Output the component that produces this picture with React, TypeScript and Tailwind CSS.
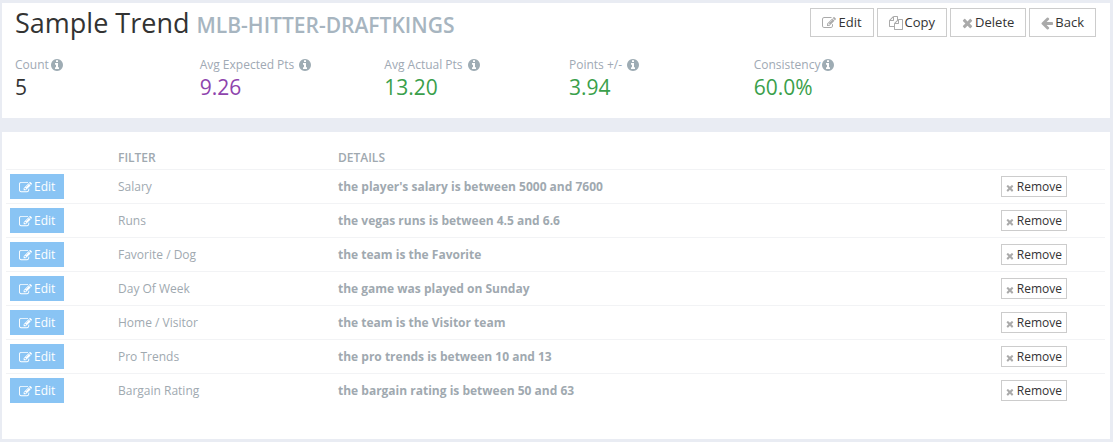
import type { ReactNode } from "react";

const ICONS = {
  edit: {
    viewBox: "0 0 1792 1792",
    d: "M888 1184l116-116-152-152-116 116v56h96v96h56zm440-720q-16-16-33 1l-350 350q-17 17-1 33t33-1l350-350q17-17 1-33zm80 594v190q0 119-84.5 203.5t-203.5 84.5h-832q-119 0-203.5-84.5t-84.5-203.5v-832q0-119 84.5-203.5t203.5-84.5h832q63 0 117 25 15 7 18 23 3 17-9 29l-49 49q-14 14-32 8-23-6-45-6h-832q-66 0-113 47t-47 113v832q0 66 47 113t113 47h832q66 0 113-47t47-113v-126q0-13 9-22l64-64q15-15 35-7t20 29zm-96-738l288 288-672 672h-288v-288zm444 132l-92 92-288-288 92-92q28-28 68-28t68 28l152 152q28 28 28 68t-28 68z",
  },
  copy: {
    viewBox: "0 0 1792 1792",
    d: "M1696 384q40 0 68 28t28 68v1216q0 40-28 68t-68 28h-960q-40 0-68-28t-28-68v-288h-544q-40 0-68-28t-28-68v-672q0-40 20-88t48-76l408-408q28-28 76-48t88-20h416q40 0 68 28t28 68v328q68-40 128-40h416zm-544 213l-299 299h299v-299zm-640-384l-299 299h299v-299zm196 647l316-316v-416h-384v416q0 40-28 68t-68 28h-416v640h512v-256q0-40 20-88t48-76zm956 804v-1152h-384v416q0 40-28 68t-68 28h-416v640h896z",
  },
  times: {
    viewBox: "192 0 1408 1792",
    d: "M1490 1322q0 40-28 68l-136 136q-28 28-68 28t-68-28l-294-294-294 294q-28 28-68 28t-68-28l-136-136q-28-28-28-68t28-68l294-294-294-294q-28-28-28-68t28-68l136-136q28-28 68-28t68 28l294 294 294-294q28-28 68-28t68 28l136 136q28 28 28 68t-28 68l-294 294 294 294q28 28 28 68z",
  },
  back: {
    viewBox: "128 0 1536 1792",
    d: "M1664 896v128q0 53-32.5 90.5t-84.5 37.5h-704l293 294q38 36 38 90t-38 90l-75 76q-37 37-90 37-52 0-91-37l-651-652q-37-37-37-90 0-52 37-91l651-650q38-38 91-38 52 0 90 38l75 74q38 38 38 91t-38 91l-293 293h704q52 0 84.5 37.5t32.5 90.5z",
  },
  info: {
    viewBox: "128 0 1536 1792",
    d: "M1152 1376v-160q0-14-9-23t-23-9h-96v-512q0-14-9-23t-23-9h-320q-14 0-23 9t-9 23v160q0 14 9 23t23 9h96v320h-96q-14 0-23 9t-9 23v160q0 14 9 23t23 9h448q14 0 23-9t9-23zm-128-896v-160q0-14-9-23t-23-9h-192q-14 0-23 9t-9 23v160q0 14 9 23t23 9h192q14 0 23-9t9-23zm640 416q0 209-103 385.5t-279.5 279.5-385.5 103-385.5-103-279.5-279.5-103-385.5 103-385.5 279.5-279.5 385.5-103 385.5 103 279.5 279.5 103 385.5z",
  },
};

function Icon({ name, className }: { name: keyof typeof ICONS; className: string }) {
  const icon = ICONS[name];
  return (
    <svg viewBox={icon.viewBox} fill="currentColor" className={className} aria-hidden="true">
      <path d={icon.d} />
    </svg>
  );
}

const stats = [
  { label: "Count", value: "5", color: "text-[#333333]", gap: "gap-[2px]" },
  { label: "Avg Expected Pts", value: "9.26", color: "text-[#8e44ad]", gap: "gap-[5px]" },
  { label: "Avg Actual Pts", value: "13.20", color: "text-[#3a9f4b]", gap: "gap-[5px]" },
  { label: "Points +/-", value: "3.94", color: "text-[#3a9f4b]", gap: "gap-[5px]" },
  { label: "Consistency", value: "60.0%", color: "text-[#3a9f4b]", gap: "gap-[2px]" },
];

const filters = [
  { name: "Salary", details: "the player's salary is between 5000 and 7600" },
  { name: "Runs", details: "the vegas runs is between 4.5 and 6.6" },
  { name: "Favorite / Dog", details: "the team is the Favorite" },
  { name: "Day Of Week", details: "the game was played on Sunday" },
  { name: "Home / Visitor", details: "the team is the Visitor team" },
  { name: "Pro Trends", details: "the pro trends is between 10 and 13" },
  { name: "Bargain Rating", details: "the bargain rating is between 50 and 63" },
];

function ToolbarButton({ icon, children }: { icon: keyof typeof ICONS; children: ReactNode }) {
  return (
    <button
      type="button"
      className="flex h-[29px] items-center gap-[2px] border border-[#cccccc] bg-white px-[11px] text-[13px] text-[#333333] hover:bg-gray-100"
    >
      <Icon name={icon} className="h-[14px] text-[#aaaaaa]" />
      {children}
    </button>
  );
}

export default function App() {
  return (
    <main className="min-h-screen bg-[#e9ecf3] pt-[3px] pr-[3px] pb-[3px] pl-[2px] font-['Open_Sans',sans-serif]">
      <section className="bg-white pb-[18px]">
        <div className="flex items-start justify-between pr-[14px] pl-[13px]">
          <h1 className="pt-[2px] text-[27px] leading-[36px] text-[#333333]">
            Sample Trend <small className="text-[21px] font-semibold text-[#a7b5c0]">MLB-HITTER-DRAFTKINGS</small>
          </h1>
          <div className="flex gap-[3px] pt-[5px]">
            <ToolbarButton icon="edit">Edit</ToolbarButton>
            <ToolbarButton icon="copy">Copy</ToolbarButton>
            <ToolbarButton icon="times">Delete</ToolbarButton>
            <ToolbarButton icon="back">Back</ToolbarButton>
          </div>
        </div>
        <dl className="mt-[13px] grid grid-cols-6">
          {stats.map((s) => (
            <div key={s.label} className="pl-[13px]">
              <dt className={`flex items-center text-[12px] leading-[18px] text-[#a0a9b4] ${s.gap}`}>
                {s.label}
                <Icon name="info" className="h-[14px] text-[#9eacb4]" />
              </dt>
              <dd className={`text-[21px] leading-[26px] ${s.color}`}>{s.value}</dd>
            </div>
          ))}
        </dl>
      </section>

      <section className="mt-[14px] bg-white pt-[12px] pr-[5px] pb-[32px] pl-[4px]">
        <table className="w-full table-fixed border-collapse text-left text-[12px] text-[#a0a9b0]">
          <thead>
            <tr className="h-[25px]">
              <th className="w-[108px]"></th>
              <th className="w-[220px] px-[4px] pt-[4px] font-semibold">FILTER</th>
              <th className="px-[4px] pt-[4px] font-semibold">DETAILS</th>
              <th className="w-[108px]"></th>
            </tr>
          </thead>
          <tbody>
            {filters.map((f) => (
              <tr key={f.name} className="h-[34px] border-t border-[#f2f3f5]">
                <td className="px-[4px]">
                  <button
                    type="button"
                    className="flex h-[25px] items-center gap-[2px] bg-[#89c4f4] px-[9px] pt-[2px] text-[12px] text-white hover:bg-[#5caeef]"
                  >
                    <Icon name="edit" className="h-[13px]" />
                    Edit
                  </button>
                </td>
                <td className="px-[4px] pt-[2px]">{f.name}</td>
                <td className="px-[4px] pt-[2px] font-bold">{f.details}</td>
                <td className="px-[4px]">
                  <button
                    type="button"
                    className="flex h-[21px] items-center gap-[3px] border border-[#cccccc] bg-white px-[4px] pt-[2px] text-[12px] text-[#333333] hover:bg-gray-100"
                  >
                    <Icon name="times" className="mt-[2px] h-[10px] text-[#aaaaaa]" />
                    Remove
                  </button>
                </td>
              </tr>
            ))}
          </tbody>
        </table>
      </section>
    </main>
  );
}
